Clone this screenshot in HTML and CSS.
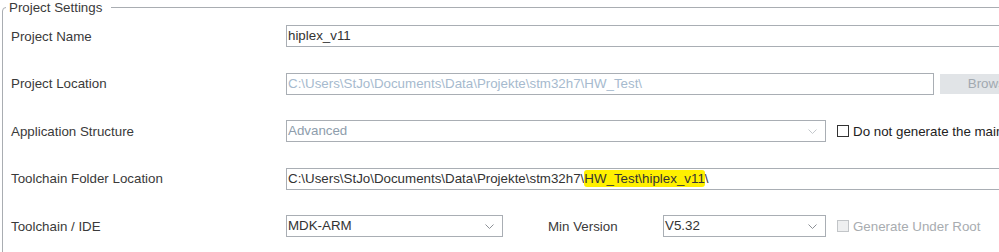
FILE: index.html
```html
<!DOCTYPE html>
<html>
<head>
<meta charset="utf-8">
<link rel="stylesheet" href="styles.css">
</head>
<body>
<fieldset class="group">
  <legend class="group-title">Project Settings</legend>
  <div class="rows">
    <div class="row">
      <span class="label">Project Name</span>
      <div class="field field-wide">hiplex_v11</div>
    </div>
    <div class="row">
      <span class="label">Project Location</span>
      <div class="field field-loc disabled">C:\Users\StJo\Documents\Data\Projekte\stm32h7\HW_Test\</div>
      <div class="button disabled-btn">Browse</div>
    </div>
    <div class="row">
      <span class="label">Application Structure</span>
      <div class="field combo combo-app disabled-combo">
        <span class="combo-text">Advanced</span>
        <svg class="chev" width="9" height="5" viewBox="0 0 9 5"><polyline points="0.5,0.5 4.5,4.5 8.5,0.5" fill="none" stroke="#c4c8cc" stroke-width="1"/></svg>
      </div>
      <span class="check"></span>
      <span class="check-text">Do not generate the main()</span>
    </div>
    <div class="row">
      <span class="label">Toolchain Folder Location</span>
      <div class="field field-wide">C:\Users\StJo\Documents\Data\Projekte\stm32h7\<span class="hl">HW_Test\hiplex_v11</span>\</div>
    </div>
    <div class="row">
      <span class="label">Toolchain / IDE</span>
      <div class="field combo combo-ide">
        <span class="combo-text">MDK-ARM</span>
        <svg class="chev" width="9" height="5" viewBox="0 0 9 5"><polyline points="0.5,0.5 4.5,4.5 8.5,0.5" fill="none" stroke="#8c9096" stroke-width="1"/></svg>
      </div>
      <span class="label-mid">Min Version</span>
      <div class="field combo combo-ver">
        <span class="combo-text">V5.32</span>
        <svg class="chev" width="9" height="5" viewBox="0 0 9 5"><polyline points="0.5,0.5 4.5,4.5 8.5,0.5" fill="none" stroke="#8c9096" stroke-width="1"/></svg>
      </div>
      <span class="check check-disabled"></span>
      <span class="check-text check-text-disabled">Generate Under Root</span>
    </div>
  </div>
</fieldset>
</body>
</html>
```
FILE: styles.css
```css
html, body {
  margin: 0;
  padding: 0;
  width: 999px;
  height: 252px;
  overflow: hidden;
  background: #ffffff;
}

body {
  font-family: "Liberation Sans", Arial, sans-serif;
  font-size: 13.33px;
  color: #3a3a3a;
}

.group {
  margin: 0 0 0 2px;
  padding: 10px 0 0 8px;
  width: 1200px;
  height: 320px;
  border: 1px solid #a9adb2;
  border-radius: 4px;
  box-sizing: border-box;
}

.group-title {
  margin-left: -5px;
  padding: 0 9px 0 3px;
  line-height: 15px;
  color: #3a3a3a;
}

.rows {
  display: flex;
  flex-direction: column;
  row-gap: 25.5px;
}

.row {
  display: flex;
  align-items: center;
  height: 22px;
}

.label {
  width: 275px;
  flex: none;
}

.field {
  box-sizing: border-box;
  height: 22px;
  border: 1px solid #a9aeb4;
  padding: 0 0 0 1px;
  line-height: 20px;
  color: #333333;
  white-space: nowrap;
  flex: none;
  background: #ffffff;
}

.field-wide {
  width: 800px;
}

.field-loc {
  width: 648px;
}

.disabled {
  color: #a6bace;
}

.button {
  box-sizing: border-box;
  margin-left: 6px;
  width: 100px;
  height: 20px;
  line-height: 20px;
  text-align: center;
  flex: none;
}

.disabled-btn {
  background: #e1e4e7;
  color: #a2a9b0;
}

.combo {
  display: flex;
  align-items: center;
  justify-content: space-between;
  padding-right: 8px;
}

.combo-app {
  width: 540px;
}

.disabled-combo .combo-text {
  color: #8e9dac;
}

.combo-ide {
  width: 217px;
}

.combo-ver {
  width: 163px;
}

.chev {
  display: block;
  margin-top: 1px;
}

.label-mid {
  margin-left: 45px;
  width: 115px;
  flex: none;
}

.check {
  box-sizing: border-box;
  margin-left: 11px;
  width: 12px;
  height: 12px;
  border: 1px solid #333333;
  background: #ffffff;
  flex: none;
}

.check-disabled {
  border-color: #c2c5c8;
  background: #eeeff0;
}

.check-text {
  margin-left: 4px;
  color: #222222;
  white-space: nowrap;
}

.check-text-disabled {
  color: #a8acb0;
}

.hl {
  background: #fff000;
  border-radius: 3px;
  padding: 1px 0;
}
```
